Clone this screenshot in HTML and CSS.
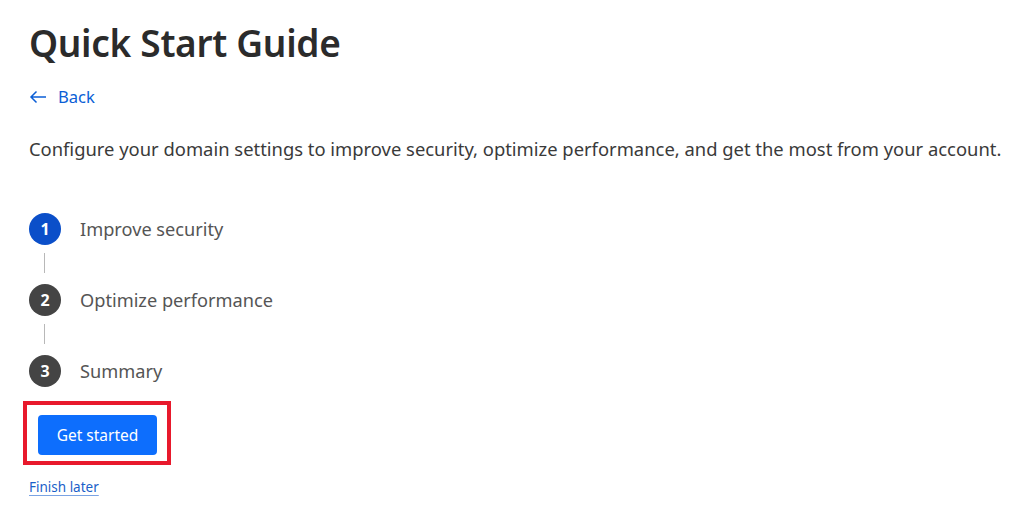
FILE: index.html
```html
<!DOCTYPE html>
<html>
<head>
<meta charset="utf-8">
<link rel="stylesheet" href="styles.css">
</head>
<body>
<main class="page">
  <h1 class="title">Quick Start Guide</h1>
  <a class="back" href="#">
    <svg class="back-icon" viewBox="0 0 18 14" width="18" height="14"><path d="M17 7H2M7.5 1.5L2 7l5.5 5.5" fill="none" stroke="currentColor" stroke-width="1.5"/></svg>
    <span>Back</span>
  </a>
  <p class="intro">Configure your domain settings to improve security, optimize performance, and get the most from your account.</p>
  <ol class="steps">
    <li class="step active"><span class="num">1</span><span class="label">Improve security</span></li>
    <li class="connector"></li>
    <li class="step"><span class="num">2</span><span class="label">Optimize performance</span></li>
    <li class="connector"></li>
    <li class="step"><span class="num">3</span><span class="label">Summary</span></li>
  </ol>
  <div class="highlight"><button class="cta">Get started</button></div>
  <a class="later" href="#">Finish later</a>
</main>
</body>
</html>
```
FILE: styles.css
```css
* { box-sizing: border-box; }
html, body { margin: 0; padding: 0; background: #fff; }
body { font-family: "Noto Sans", "Open Sans", sans-serif; color: #333; }
.page { padding: 20px 0 0 29px; display: flex; flex-direction: column; align-items: flex-start; }
.title { font-size: 37px; font-weight: 600; margin: 0; line-height: 46px; color: #2b2b2b; letter-spacing: -0.3px; }
.back { display: flex; align-items: center; gap: 11px; color: #0b5fd6; text-decoration: none; font-size: 16.6px; margin-top: 19px; line-height: 24px; }
.back-icon { display: block; }
.intro { font-size: 18.4px; margin: 27px 0 0; line-height: 26px; color: #3a3a3a; }
.steps { list-style: none; margin: 51px 0 0; padding: 0; display: flex; flex-direction: column; }
.step { display: flex; align-items: center; gap: 19px; height: 32px; }
.num { width: 32px; height: 32px; border-radius: 50%; background: #444; color: #fff; font-weight: 700; font-size: 16px; display: flex; align-items: center; justify-content: center; }
.active .num { background: #0b4fc9; }
.label { font-size: 18.2px; color: #555; }
.connector { width: 1px; height: 20px; background: #b8b8b8; margin: 8px 0 11px 15px; }
.highlight { margin: 14px 0 0 -6px; border: 4px solid #e8192c; padding: 10px 10px 6px 11px; }
.cta { background: #0d6efd; color: #fff; border: none; border-radius: 4px; font-family: inherit; font-size: 15.5px; height: 40px; width: 119px; padding: 0; }
.later { margin-top: 13px; font-size: 13.5px; color: #1a5fc9; text-decoration: underline; text-decoration-color: #7aa3e3; text-underline-offset: 3px; }
```
